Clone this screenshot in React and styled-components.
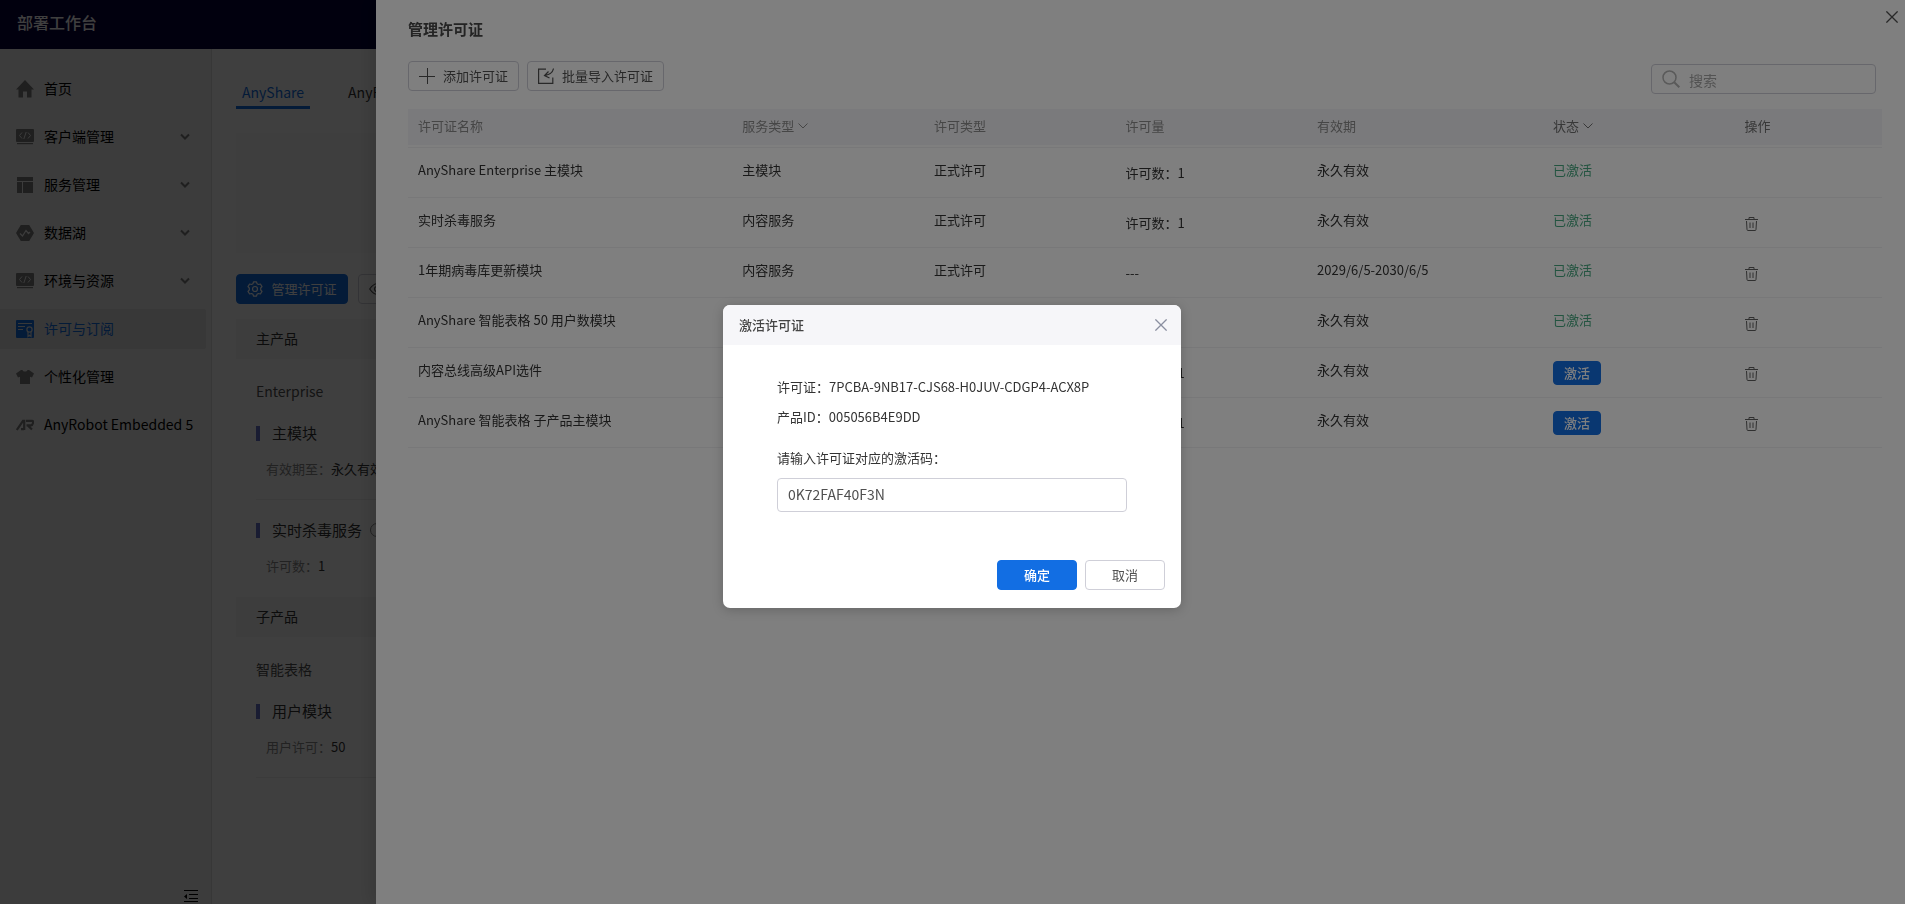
import React, { useState } from 'react';
import styled, { createGlobalStyle } from 'styled-components';

const GlobalStyle = createGlobalStyle`
    * {
        box-sizing: border-box;
    }

    body {
        margin: 0;
        overflow: hidden;
        background: #fff;
        color: #333;
        font-family: "Noto Sans CJK SC", "Noto Sans", sans-serif;
        font-size: 13px;
        line-height: 20px;
    }

    button, input {
        font-family: inherit;
    }

    svg {
        display: block;
        flex: none;
    }
`;

const Page = styled.div`
    height: 100vh;
    display: flex;
    flex-direction: column;
`;

const TopBar = styled.header`
    height: 49px;
    padding: 12px 17px;
    background: #04003a;
    color: #fff;
    font-size: 16px;
    font-weight: 500;
    line-height: 20px;
`;

const Columns = styled.div`
    flex: 1;
    min-height: 0;
    display: flex;
`;

const Sidebar = styled.nav`
    width: 212px;
    padding-top: 20px;
    display: flex;
    flex-direction: column;
    gap: 8px;
    background: #f2f2f2;
    border-right: 1px solid #dedede;
`;

const MenuItem = styled.a`
    height: 40px;
    margin-right: 5px;
    padding: 0 16px;
    display: flex;
    align-items: center;
    gap: 10px;
    border-radius: 0 2px 2px 0;
    background: ${({ $active }) => ($active ? '#e0e0e0' : 'transparent')};
    color: ${({ $active }) => ($active ? '#126ee3' : '#000')};
    font-size: 14px;
    text-decoration: none;
    white-space: nowrap;

    svg {
        color: ${({ $active }) => ($active ? '#126ee3' : '#7c7c7c')};
    }
`;

const MenuLabel = styled.span`
    flex: 1;
    padding-bottom: 2px;
`;

const CollapseBtn = styled.button`
    margin: auto 13px 1px auto;
    padding: 0;
    border: 0;
    background: none;
    color: #000;
`;

const Main = styled.main`
    flex: 1;
    padding: 29px 24px 0;
`;

const Tabs = styled.div`
    display: flex;
    gap: 32px;
`;

const Tab = styled.button`
    padding: 0 6px;
    border: 0;
    border-bottom: 3px solid ${({ $active }) => ($active ? '#126ee3' : 'transparent')};
    background: none;
    color: ${({ $active }) => ($active ? '#126ee3' : '#333')};
    font-size: 14px;
    line-height: 28px;
`;

const Banner = styled.div`
    height: 120px;
    margin-top: 24px;
    background: #f9f9f9;
`;

const Actions = styled.div`
    margin-top: ${({ $top }) => $top};
    display: flex;
    gap: ${({ $gap }) => $gap};
`;

const Button = styled.button`
    height: 30px;
    min-width: ${({ $minWidth }) => $minWidth || '0'};
    padding: 0 10px;
    display: inline-flex;
    align-items: center;
    justify-content: center;
    gap: 8px;
    border: 1px solid ${({ $primary }) => ($primary ? '#126ee3' : '#cfcfd8')};
    border-radius: 4px;
    background: ${({ $primary }) => ($primary ? '#126ee3' : '#fff')};
    color: ${({ $primary }) => ($primary ? '#fff' : '#505050')};
    font-size: 13px;
    font-weight: ${({ $bold }) => ($bold ? 500 : 400)};
    line-height: 20px;
    white-space: nowrap;
`;

const SmallButton = styled(Button)`
    height: 24px;
`;

const Section = styled.h2`
    margin: 0;
    padding: 0 20px 2px;
    background: #f5f5f5;
    font-size: 14px;
    font-weight: 400;
    line-height: 38px;

    ${Actions} + & {
        margin-top: 15px;
    }
`;

const Group = styled.div`
    padding-left: 20px;
`;

const GroupTitle = styled.h3`
    margin: 22px 0;
    color: #505050;
    font-size: 14px;
    font-weight: 400;
    line-height: 20px;
`;

const Module = styled.div`
    padding-bottom: 20px;
    border-bottom: 1px solid ${({ $last }) => ($last ? 'transparent' : '#ececec')};

    & + & {
        margin-top: 20px;
    }
`;

const ModuleTitle = styled.div`
    display: flex;
    align-items: center;
    gap: 8px;
    font-size: 15px;

    &::before {
        content: '';
        width: 4px;
        height: 15px;
        margin-right: 4px;
        background: #6470c8;
    }

    svg {
        color: #888;
    }
`;

const ModuleInfo = styled.div`
    margin-top: 16px;
    padding-left: 10px;
    color: #888;
    white-space: nowrap;

    span {
        color: #333;
    }
`;

const Mask = styled.div`
    position: fixed;
    inset: 0;
    display: flex;
    align-items: center;
    justify-content: center;
    padding: 9px 1px 0 0;
    background: rgba(0, 0, 0, 0.5);
`;

const Drawer = styled.aside`
    position: fixed;
    top: 0;
    right: 0;
    bottom: 0;
    width: calc(100% - 376px);
    padding: 19px 23px 0 32px;
    background: #fff;
    box-shadow: -6px 0 16px rgba(0, 0, 0, 0.12);
`;

const DrawerTitle = styled.h1`
    margin: 0;
    color: #484848;
    font-size: 15px;
    font-weight: 700;
    line-height: 20px;
`;

const CloseBtn = styled.button`
    padding: 0;
    border: 0;
    background: none;
    color: ${({ $dark }) => ($dark ? '#505050' : '#8a8fa0')};
`;

const DrawerClose = styled(CloseBtn)`
    position: absolute;
    top: 11px;
    right: 7px;
`;

const Toolbar = styled.div`
    margin-top: 22px;
    padding-right: 6px;
    display: flex;
    justify-content: space-between;
    align-items: flex-start;
`;

const SearchBox = styled.label`
    width: 225px;
    height: 30px;
    margin-top: 3px;
    padding: 0 10px;
    display: flex;
    align-items: center;
    gap: 9px;
    border: 1px solid #cfcfd8;
    border-radius: 4px;
    color: #b4b4b4;

    input {
        flex: 1;
        min-width: 0;
        padding: 2px 0 0;
        border: 0;
        outline: 0;
        background: none;
        font-size: 14px;
    }

    input::placeholder {
        color: #a6a6a6;
    }
`;

const Table = styled.table`
    width: 100%;
    margin-top: 15px;
    table-layout: fixed;
    border-spacing: 0;
    text-align: left;
`;

const Th = styled.th`
    width: ${({ $width }) => $width};
    height: 38px;
    padding: 0 10px 2px;
    background: #f5f5f9;
    border-bottom: 2px solid #fff;
    color: ${({ $dark }) => ($dark ? '#707070' : '#8c8c8c')};
    font-weight: 400;

    span {
        display: flex;
        align-items: center;
        gap: 4px;
    }
`;

const Td = styled.td`
    height: 50px;
    padding: ${({ $top }) => $top || '12px'} 10px 0;
    border-top: 1px solid #f0f0f2;
    color: ${({ $green }) => ($green ? '#46a880' : '#333')};
    vertical-align: top;
    line-height: 20px;

    tr:last-child > & {
        height: 51px;
        border-bottom: 1px solid #f0f0f2;
    }
`;

const IconBtn = styled.button`
    padding: 0;
    display: block;
    border: 0;
    background: none;
    color: #606060;
`;

const Dialog = styled.div`
    width: 458px;
    border-radius: 7px;
    background: #fff;
    box-shadow: 0 2px 12px rgba(0, 0, 0, 0.2);
    overflow: hidden;
`;

const DialogHead = styled.div`
    height: 40px;
    padding: 0 14px 0 16px;
    display: flex;
    align-items: center;
    justify-content: space-between;
    background: #f6f6f9;
`;

const DialogTitle = styled.h2`
    margin: 0;
    color: #444;
    font-size: 13px;
    font-weight: 500;
`;

const DialogBody = styled.div`
    padding: 27px 54px 48px;

    p {
        margin: 0;
        line-height: 30px;
    }

    label {
        display: block;
        margin: 16px 0 10px;
    }
`;

const CodeInput = styled.input`
    width: 100%;
    height: 34px;
    padding: 0 10px 3px;
    display: block;
    border: 1px solid #cfcfd8;
    border-radius: 4px;
    color: #505050;
    font-size: 14px;
    outline: 0;
`;

const DialogFoot = styled.div`
    padding: 0 16px 18px;
    display: flex;
    justify-content: flex-end;
    gap: 8px;
`;

const Home = () => (
    <svg width="18" height="18" viewBox="0 0 18 18" fill="currentColor">
        <path d="M9 0 18 9.500H15.500V17.500H11V11.500H7V17.500H2.500V9.500H0Z" />
    </svg>
);

const Code = () => (
    <svg width="18" height="18" viewBox="0 0 18 18" fill="currentColor">
        <rect y="1" width="18" height="13" rx="1" />
        <rect x="1" y="15" width="16" height="1.200" />
        <path d="M6 4.500 3.500 7.500 6 10.500M12 4.500 14.500 7.500 12 10.500M10.200 4 7.800 11" fill="none" stroke="#f2f2f2" />
    </svg>
);

const Layout = () => (
    <svg width="18" height="18" viewBox="0 0 18 18" fill="currentColor">
        <path d="M1 1H17V5H1ZM1 6H6V17H1ZM7 6H17V17H7Z" />
    </svg>
);

const Lake = () => (
    <svg width="18" height="18" viewBox="0 0 18 18" fill="currentColor">
        <path d="M4.800 1H13.200L18 9 13.200 17H4.800L0 9Z" />
        <path d="M4 9.500 6.500 12 10 6.500 12.500 9.500 14 8" fill="none" stroke="#f2f2f2" strokeWidth="1.200" />
    </svg>
);

const License = () => (
    <svg width="18" height="18" viewBox="0 0 18 18" fill="currentColor">
        <rect width="18" height="18" rx="1" />
        <path d="M2 3.500H16M2 6.500H9M2 9.500H7" stroke="#e0e0e0" strokeWidth="1.200" />
        <circle cx="13.500" cy="9.500" r="2.600" fill="none" stroke="#e0e0e0" strokeWidth="1.200" />
        <path d="M12 12V16.500L13.500 15.300 15 16.500V12" fill="none" stroke="#e0e0e0" strokeWidth="1.200" />
    </svg>
);

const Shirt = () => (
    <svg width="18" height="18" viewBox="0 0 18 18" fill="currentColor">
        <path d="M5 2H6.500C7 4 11 4 11.500 2H13L18 5.500 16 9.500 14 8.800V16H4V8.800L2 9.500 0 5.500Z" />
    </svg>
);

const Robot = () => (
    <svg width="18" height="18" viewBox="0 0 18 18" fill="none" stroke="currentColor" strokeWidth="2.200">
        <path d="M.8 14 7 4.800H8.200V14M10 4.800H16.200Q17.500 4.800 17 7 16.600 9.300 15 9.300H10.500M11.500 9.300 16 13.500M5 13.200H8" />
    </svg>
);

const Chevron = () => (
    <svg width="10" height="10" viewBox="0 0 10 10" fill="none" stroke="currentColor" strokeWidth="2">
        <path d="M1 2.500 5 6.500 9 2.500" />
    </svg>
);

const ThinChevron = () => (
    <svg width="10" height="10" viewBox="0 0 10 10" fill="none" stroke="currentColor">
        <path d="M.5 2.500 5 7 9.500 2.500" />
    </svg>
);

const Collapse = () => (
    <svg width="14" height="14" viewBox="0 0 14 14" fill="currentColor">
        <path d="M0 1H14V2H0ZM5 5H14V6H5ZM5 9H14V10H5ZM0 12H14V13H0ZM0 7.500 3 5V10Z" />
    </svg>
);

const Gear = () => (
    <svg width="16" height="16" viewBox="0 0 16 16" fill="none" stroke="currentColor" strokeWidth="1.200" strokeLinejoin="round">
        <path d="M6.500.8H9.500L10 2.700 11.500 3.500 13.400 3 15 5.600 13.700 7V9L15 10.400 13.400 13 11.500 12.500 10 13.300 9.500 15.200H6.500L6 13.300 4.500 12.500 2.600 13 1 10.400 2.300 9V7L1 5.600 2.600 3 4.500 3.500 6 2.700Z" />
        <circle cx="8" cy="8" r="2.500" />
    </svg>
);

const Eye = () => (
    <svg width="16" height="16" viewBox="0 0 16 16" fill="none" stroke="currentColor" strokeWidth="1.200">
        <path d="M.7 8Q8-2.500 15.300 8 8 18.500.7 8Z" />
        <circle cx="8" cy="8" r="2.500" />
    </svg>
);

const Info = () => (
    <svg width="14" height="14" viewBox="0 0 14 14" fill="none" stroke="currentColor">
        <circle cx="7" cy="7" r="6.500" />
        <path d="M7 6V10.500M7 3.500V4.500" />
    </svg>
);

const Plus = () => (
    <svg width="16" height="16" viewBox="0 0 16 16" stroke="currentColor">
        <path d="M0 8.500H16M8.500 0V16" />
    </svg>
);

const Import = () => (
    <svg width="16" height="16" viewBox="0 0 16 16" fill="none" stroke="currentColor" strokeWidth="1.200">
        <path d="M8 1.200H.6V15.400H14.800V9.500M15.500.5Q14.500 6 7 7.500M10.500 3.500 6.500 7.500 11.500 10" />
    </svg>
);

const Search = () => (
    <svg width="18" height="18" viewBox="0 0 18 18" fill="none" stroke="currentColor" strokeWidth="1.500">
        <circle cx="7.500" cy="7.500" r="6.500" />
        <path d="M12.200 12.200 17.300 17.300" strokeWidth="2" />
    </svg>
);

const Cross = () => (
    <svg width="12" height="12" viewBox="0 0 12 12" stroke="currentColor" strokeWidth="1.300">
        <path d="M.4.4 11.600 11.600M11.600.4.4 11.600" />
    </svg>
);

const Trash = () => (
    <svg width="13" height="14" viewBox="0 0 13 14" fill="none" stroke="currentColor">
        <path d="M0 2.500H13M4 2.500V.5H9V2.500M1.500 4 2 12.500Q2 13.500 3 13.500H10Q11 13.500 11 12.500L11.500 4M5 5.500V11M8 5.500V11" />
    </svg>
);

const menu = [
    { label: '首页', Icon: Home },
    { label: '客户端管理', Icon: Code, sub: true },
    { label: '服务管理', Icon: Layout, sub: true },
    { label: '数据湖', Icon: Lake, sub: true },
    { label: '环境与资源', Icon: Code, sub: true },
    { label: '许可与订阅', Icon: License, active: true },
    { label: '个性化管理', Icon: Shirt },
    { label: 'AnyRobot Embedded 5', Icon: Robot },
];

const columns = [
    { label: '许可证名称', width: '22%' },
    { label: '服务类型', width: '13%', filter: true },
    { label: '许可类型', width: '13%' },
    { label: '许可量', width: '13%' },
    { label: '有效期', width: '16%' },
    { label: '状态', width: '13%', filter: true, dark: true },
    { label: '操作', width: '10%', dark: true },
];

const licenses = [
    { name: 'AnyShare Enterprise 主模块', service: '主模块', type: '正式许可', quota: '许可数：1', expire: '永久有效', active: true, fixed: true },
    { name: '实时杀毒服务', service: '内容服务', type: '正式许可', quota: '许可数：1', expire: '永久有效', active: true },
    { name: '1年期病毒库更新模块', service: '内容服务', type: '正式许可', quota: '---', expire: '2029/6/5-2030/6/5', active: true },
    { name: 'AnyShare 智能表格 50 用户数模块', expire: '永久有效', active: true },
    { name: '内容总线高级API选件', quota: '许可数：1', expire: '永久有效' },
    { name: 'AnyShare 智能表格 子产品主模块', quota: '许可数：1', expire: '永久有效' },
];

function LicenseTable() {
    return (
        <Table>
            <thead>
                <tr>
                    {columns.map(({ label, width, filter, dark }) => (
                        <Th key={label} $width={width} $dark={dark}>
                            <span>
                                {label}
                                {filter && <ThinChevron />}
                            </span>
                        </Th>
                    ))}
                </tr>
            </thead>
            <tbody>
                {licenses.map((item) => (
                    <tr key={item.name}>
                        <Td>{item.name}</Td>
                        <Td>{item.service}</Td>
                        <Td>{item.type}</Td>
                        <Td $top="15px">{item.quota}</Td>
                        <Td>{item.expire}</Td>
                        {item.active ? (
                            <Td $green>已激活</Td>
                        ) : (
                            <Td $top="13px">
                                <SmallButton $primary $bold>激活</SmallButton>
                            </Td>
                        )}
                        <Td $top="19px">
                            {!item.fixed && (
                                <IconBtn aria-label="删除">
                                    <Trash />
                                </IconBtn>
                            )}
                        </Td>
                    </tr>
                ))}
            </tbody>
        </Table>
    );
}

function ActivateDialog() {
    const [code, setCode] = useState('0K72FAF40F3N');

    return (
        <Dialog role="dialog">
            <DialogHead>
                <DialogTitle>激活许可证</DialogTitle>
                <CloseBtn aria-label="关闭">
                    <Cross />
                </CloseBtn>
            </DialogHead>
            <DialogBody>
                <p>许可证：7PCBA-9NB17-CJS68-H0JUV-CDGP4-ACX8P</p>
                <p>产品ID：005056B4E9DD</p>
                <label htmlFor="code">请输入许可证对应的激活码：</label>
                <CodeInput id="code" value={code} onChange={(e) => setCode(e.target.value)} />
            </DialogBody>
            <DialogFoot>
                <Button $primary $bold $minWidth="80px">确定</Button>
                <Button $minWidth="80px">取消</Button>
            </DialogFoot>
        </Dialog>
    );
}

export default function App() {
    return (
        <>
            <GlobalStyle />
            <Page>
                <TopBar>部署工作台</TopBar>
                <Columns>
                    <Sidebar>
                        {menu.map(({ label, Icon, sub, active }) => (
                            <MenuItem key={label} href="#" $active={active}>
                                <Icon />
                                <MenuLabel>{label}</MenuLabel>
                                {sub && <Chevron />}
                            </MenuItem>
                        ))}
                        <CollapseBtn aria-label="收起">
                            <Collapse />
                        </CollapseBtn>
                    </Sidebar>
                    <Main>
                        <Tabs>
                            <Tab $active>AnyShare</Tab>
                            <Tab>AnyRobot</Tab>
                        </Tabs>
                        <Banner />
                        <Actions $top="21px" $gap="10px">
                            <Button $primary $minWidth="112px">
                                <Gear />
                                管理许可证
                            </Button>
                            <Button aria-label="查看">
                                <Eye />
                            </Button>
                        </Actions>
                        <Section>主产品</Section>
                        <Group>
                            <GroupTitle>Enterprise</GroupTitle>
                            <Module>
                                <ModuleTitle>主模块</ModuleTitle>
                                <ModuleInfo>
                                    有效期至：<span>永久有效</span>
                                </ModuleInfo>
                            </Module>
                            <Module $last>
                                <ModuleTitle>
                                    实时杀毒服务
                                    <Info />
                                </ModuleTitle>
                                <ModuleInfo>
                                    许可数：<span>1</span>
                                </ModuleInfo>
                            </Module>
                        </Group>
                        <Section>子产品</Section>
                        <Group>
                            <GroupTitle>智能表格</GroupTitle>
                            <Module>
                                <ModuleTitle>用户模块</ModuleTitle>
                                <ModuleInfo>
                                    用户许可：<span>50</span>
                                </ModuleInfo>
                            </Module>
                        </Group>
                    </Main>
                </Columns>
            </Page>

            <Mask />
            <Drawer>
                <DrawerTitle>管理许可证</DrawerTitle>
                <DrawerClose $dark aria-label="关闭">
                    <Cross />
                </DrawerClose>
                <Toolbar>
                    <Actions $top="0" $gap="8px">
                        <Button>
                            <Plus />
                            添加许可证
                        </Button>
                        <Button>
                            <Import />
                            批量导入许可证
                        </Button>
                    </Actions>
                    <SearchBox>
                        <Search />
                        <input type="text" placeholder="搜索" aria-label="搜索" />
                    </SearchBox>
                </Toolbar>
                <LicenseTable />
            </Drawer>

            <Mask>
                <ActivateDialog />
            </Mask>
        </>
    );
}
